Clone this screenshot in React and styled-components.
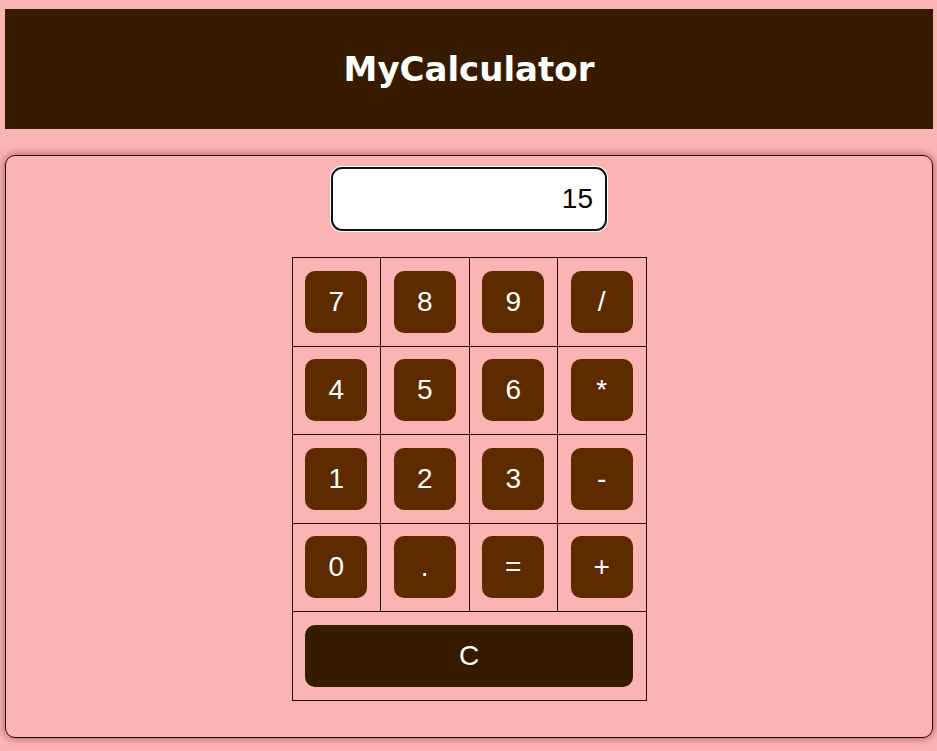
import React, { useState } from "react";
import styled, { createGlobalStyle } from "styled-components";

const GlobalStyle = createGlobalStyle`
  html, body {
    margin: 0;
    padding: 0;
    background: #fbb4b4;
  }
  body {
    font-family: "Liberation Sans", Arial, sans-serif;
  }
`;

const Page = styled.div`
  padding: 9px 4px 0 5px;
  min-height: 751px;
  box-sizing: border-box;
  display: flex;
  flex-direction: column;
  gap: 26px;
`;

const Header = styled.header`
  height: 120px;
  background: #361b00;
  display: flex;
  align-items: center;
  justify-content: center;
`;

const Title = styled.h1`
  margin: 0;
  color: #ffffff;
  font-family: "DejaVu Sans", Verdana, sans-serif;
  font-weight: bold;
  font-size: 34px;
`;

const Card = styled.main`
  height: 583px;
  box-sizing: border-box;
  border: 1px solid #2a0800;
  border-radius: 10px;
  box-shadow: 0 0 8px rgba(90, 20, 10, 0.6);
  padding: 11px 0 0;
  display: flex;
  flex-direction: column;
  align-items: center;
  gap: 26px;
`;

const Display = styled.input`
  width: 276px;
  height: 64px;
  box-sizing: border-box;
  border: 2px solid #111;
  border-radius: 11px;
  box-shadow: 0 0 0 1px #ffffff;
  background: #ffffff;
  text-align: right;
  padding: 0 12px;
  font-family: "Liberation Sans", Arial, sans-serif;
  font-size: 28px;
  color: #000;
  outline: none;
`;

const Keypad = styled.table`
  border-collapse: collapse;
`;

const Cell = styled.td`
  border: 1px solid #2a0800;
  padding: 12.75px;
  text-align: center;
`;

const Key = styled.button`
  width: ${(p) => (p.$wide ? "100%" : "62px")};
  height: 62px;
  display: block;
  margin: 0 auto;
  border: none;
  border-radius: 10px;
  background: ${(p) => (p.$wide ? "#361b00" : "#5e2a00")};
  color: #ffffff;
  font-family: "Liberation Sans", Arial, sans-serif;
  font-size: 28px;
  cursor: pointer;
`;

const rows = [
  ["7", "8", "9", "/"],
  ["4", "5", "6", "*"],
  ["1", "2", "3", "-"],
  ["0", ".", "=", "+"],
];

export default function App() {
  const [value] = useState("15");

  return (
    <>
      <GlobalStyle />
      <Page>
        <Header>
          <Title>MyCalculator</Title>
        </Header>
        <Card>
          <Display value={value} readOnly />
          <Keypad>
            <tbody>
              {rows.map((row, i) => (
                <tr key={i}>
                  {row.map((k) => (
                    <Cell key={k}>
                      <Key>{k}</Key>
                    </Cell>
                  ))}
                </tr>
              ))}
              <tr>
                <Cell colSpan={4}>
                  <Key $wide>C</Key>
                </Cell>
              </tr>
            </tbody>
          </Keypad>
        </Card>
      </Page>
    </>
  );
}
